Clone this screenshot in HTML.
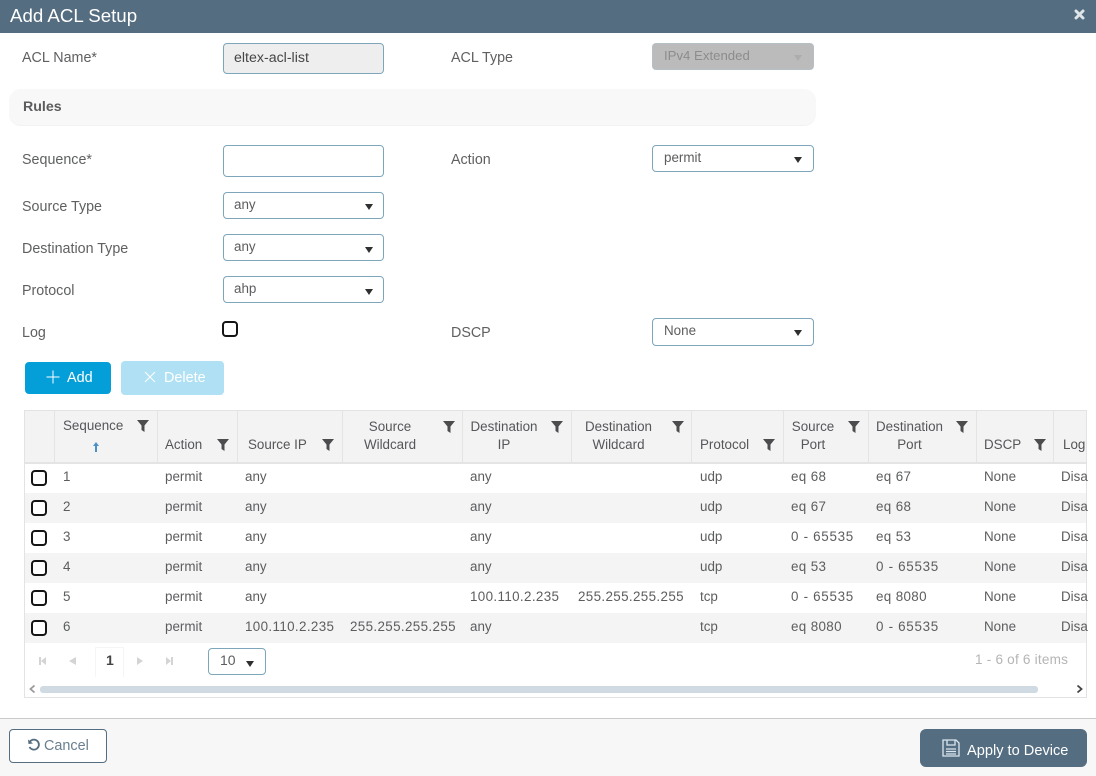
<!DOCTYPE html>
<html><head><meta charset="utf-8"><style>
html,body{margin:0;padding:0;background:#fff;}
#p{position:relative;width:1096px;height:776px;overflow:hidden;background:#fff;font-family:"Liberation Sans",sans-serif;color:#58585b;}
#p div,#p span.a,#p svg{position:absolute;}
.t{position:absolute;white-space:nowrap;font-size:14px;line-height:18px;}
.l{font-size:14.3px;color:#5f6062;}
.c{font-size:13.4px;color:#5c5d5f;}
.n{letter-spacing:.36px;}
.m{letter-spacing:.7px;}
.h{font-size:13.4px;color:#55565a;line-height:18px;text-align:center;}
.box{box-sizing:border-box;border:1px solid #7da6bb;border-radius:4px;background:#fff;}
.ar{width:0;height:0;border-left:4px solid transparent;border-right:4px solid transparent;border-top:6.500px solid #2f2f2f;}
.cb{box-sizing:border-box;width:16px;height:16px;border:2px solid #151515;border-radius:4px;background:#fff;}
.vl{width:1px;background:#e4e4e4;top:411px;height:51px;}
</style></head><body><div id="p">
<div style="left:0;top:0;width:1096px;height:33px;background:#546d81"></div>
<span class="t" style="left:10px;top:5px;font-size:18.7px;line-height:22px;color:#fff">Add ACL Setup</span>
<svg style="left:1074px;top:9px" width="11" height="11" viewBox="0 0 11 11"><path d="M2 2 L9 9 M9 2 L2 9" stroke="#dfe4e8" stroke-width="3" stroke-linecap="round"/></svg>

<span class="t l" style="left:22px;top:49px">ACL Name*</span>
<div class="box" style="left:223px;top:43px;width:161px;height:31px;background:#eee"></div>
<span class="t" style="left:234px;top:49px;font-size:14.2px;color:#454548">eltex-acl-list</span>
<span class="t l" style="left:451px;top:49px">ACL Type</span>
<div class="box" style="left:652px;top:43px;width:162px;height:27px;background:#bbb;border-color:#b4bfc6"></div>
<span class="t" style="left:664px;top:47px;font-size:13.2px;color:#8c8c8c">IPv4 Extended</span>
<div class="ar" style="left:794px;top:55px;border-top-color:#adadad"></div>

<div style="left:9px;top:89px;width:807px;height:36px;background:#f8f8f8;border-radius:12px;box-shadow:0 1px 0 #f2f2f2"></div>
<span class="t" style="left:23px;top:98px;font-size:14.2px;font-weight:bold;color:#5c5c5e">Rules</span>

<span class="t l" style="left:22px;top:151px">Sequence*</span>
<div class="box" style="left:223px;top:145px;width:161px;height:32px"></div>
<span class="t l" style="left:451px;top:151px">Action</span>
<div class="box" style="left:652px;top:145px;width:162px;height:27px"></div>
<span class="t c" style="left:664px;top:149px">permit</span>
<div class="ar" style="left:794px;top:157px"></div>

<span class="t l" style="left:22px;top:198px">Source Type</span>
<div class="box" style="left:223px;top:192px;width:161px;height:27px"></div>
<span class="t c" style="left:234px;top:196px">any</span>
<div class="ar" style="left:365px;top:204px"></div>

<span class="t l" style="left:22px;top:240px">Destination Type</span>
<div class="box" style="left:223px;top:234px;width:161px;height:27px"></div>
<span class="t c" style="left:234px;top:238px">any</span>
<div class="ar" style="left:365px;top:247px"></div>

<span class="t l" style="left:22px;top:282px">Protocol</span>
<div class="box" style="left:223px;top:276px;width:161px;height:27px"></div>
<span class="t c" style="left:234px;top:280px">ahp</span>
<div class="ar" style="left:365px;top:289px"></div>

<span class="t l" style="left:22px;top:324px">Log</span>
<div class="cb" style="left:222px;top:321px"></div>
<span class="t l" style="left:451px;top:324px">DSCP</span>
<div class="box" style="left:652px;top:318px;width:162px;height:28px"></div>
<span class="t c" style="left:664px;top:322px">None</span>
<div class="ar" style="left:794px;top:330px"></div>

<div style="left:25px;top:362px;width:86px;height:32px;background:#049fd9;border-radius:4px"></div>
<svg style="left:45px;top:369px" width="16" height="16" viewBox="0 0 16 16"><path d="M8 1.500V14.500M1.500 8H14.500" stroke="#fff" stroke-width="1"/></svg>
<span class="t" style="left:67px;top:369px;font-size:14.4px;color:#fff">Add</span>
<div style="left:121px;top:361px;width:103px;height:34px;background:#afe0f3;border-radius:4px"></div>
<svg style="left:143px;top:370px" width="14" height="14" viewBox="0 0 14 14"><path d="M2 2L12 12M12 2L2 12" stroke="#fff" stroke-width="1"/></svg>
<span class="t" style="left:164px;top:369px;font-size:14.4px;color:#fff">Delete</span>

<div style="left:24px;top:410px;width:1063px;height:288px;box-sizing:border-box;border:1px solid #e3e3e3;background:#fff"></div>
<div style="left:25px;top:411px;width:1061px;height:51px;background:#f3f3f3;border-bottom:2px solid #e4e4e4"></div>
<div class="vl" style="left:54px"></div><div class="vl" style="left:157px"></div><div class="vl" style="left:237px"></div><div class="vl" style="left:342px"></div><div class="vl" style="left:462px"></div><div class="vl" style="left:571px"></div><div class="vl" style="left:691px"></div><div class="vl" style="left:783px"></div><div class="vl" style="left:868px"></div><div class="vl" style="left:976px"></div><div class="vl" style="left:1053px"></div>

<span class="t h" style="left:63px;top:417px">Sequence</span>
<svg style="left:92px;top:441px" width="8" height="12" viewBox="0 0 8 12"><path d="M4 1L7 5H5V11H3V5H1Z" fill="#4a90c8"/></svg>
<span class="t h" style="left:165px;top:436px">Action</span>
<span class="t h" style="left:248px;top:436px">Source IP</span>
<span class="t h" style="left:345px;top:418px;width:90px">Source<br>Wildcard</span>
<span class="t h" style="left:465px;top:418px;width:78px">Destination<br>IP</span>
<span class="t h" style="left:572px;top:418px;width:93px">Destination<br>Wildcard</span>
<span class="t h" style="left:700px;top:436px">Protocol</span>
<span class="t h" style="left:785px;top:418px;width:56px">Source<br>Port</span>
<span class="t h" style="left:869px;top:418px;width:81px">Destination<br>Port</span>
<span class="t h" style="left:984px;top:436px">DSCP</span>
<span class="t h" style="left:1063px;top:436px">Log</span>

<svg style="left:136px;top:419px" width="14" height="14" viewBox="0 0 14 14"><path d="M1 1H13L8.500 6.500V13L5.500 11V6.500Z" fill="#4c4c4e"/></svg>
<svg style="left:216px;top:438px" width="14" height="14" viewBox="0 0 14 14"><path d="M1 1H13L8.500 6.500V13L5.500 11V6.500Z" fill="#4c4c4e"/></svg>
<svg style="left:321px;top:438px" width="14" height="14" viewBox="0 0 14 14"><path d="M1 1H13L8.500 6.500V13L5.500 11V6.500Z" fill="#4c4c4e"/></svg>
<svg style="left:442px;top:420px" width="14" height="14" viewBox="0 0 14 14"><path d="M1 1H13L8.500 6.500V13L5.500 11V6.500Z" fill="#4c4c4e"/></svg>
<svg style="left:550px;top:420px" width="14" height="14" viewBox="0 0 14 14"><path d="M1 1H13L8.500 6.500V13L5.500 11V6.500Z" fill="#4c4c4e"/></svg>
<svg style="left:671px;top:420px" width="14" height="14" viewBox="0 0 14 14"><path d="M1 1H13L8.500 6.500V13L5.500 11V6.500Z" fill="#4c4c4e"/></svg>
<svg style="left:762px;top:438px" width="14" height="14" viewBox="0 0 14 14"><path d="M1 1H13L8.500 6.500V13L5.500 11V6.500Z" fill="#4c4c4e"/></svg>
<svg style="left:847px;top:420px" width="14" height="14" viewBox="0 0 14 14"><path d="M1 1H13L8.500 6.500V13L5.500 11V6.500Z" fill="#4c4c4e"/></svg>
<svg style="left:955px;top:420px" width="14" height="14" viewBox="0 0 14 14"><path d="M1 1H13L8.500 6.500V13L5.500 11V6.500Z" fill="#4c4c4e"/></svg>
<svg style="left:1033px;top:438px" width="14" height="14" viewBox="0 0 14 14"><path d="M1 1H13L8.500 6.500V13L5.500 11V6.500Z" fill="#4c4c4e"/></svg>

<div style="left:25px;top:493px;width:1061px;height:30px;background:#f4f4f4"></div>
<div style="left:25px;top:553px;width:1061px;height:30px;background:#f4f4f4"></div>
<div style="left:25px;top:613px;width:1061px;height:30px;background:#f4f4f4"></div>

<div class="cb" style="left:31px;top:470px"></div><div class="cb" style="left:31px;top:500px"></div><div class="cb" style="left:31px;top:530px"></div><div class="cb" style="left:31px;top:560px"></div><div class="cb" style="left:31px;top:590px"></div><div class="cb" style="left:31px;top:620px"></div>

<span class="t c" style="left:63px;top:468px">1</span><span class="t c" style="left:165px;top:468px">permit</span><span class="t c" style="left:245px;top:468px">any</span><span class="t c" style="left:470px;top:468px">any</span><span class="t c" style="left:700px;top:468px">udp</span><span class="t c n" style="left:791px;top:468px">eq 68</span><span class="t c n" style="left:876px;top:468px">eq 67</span><span class="t c" style="left:984px;top:468px">None</span><span class="t c" style="left:1061px;top:468px">Disa</span>

<span class="t c" style="left:63px;top:498px">2</span><span class="t c" style="left:165px;top:498px">permit</span><span class="t c" style="left:245px;top:498px">any</span><span class="t c" style="left:470px;top:498px">any</span><span class="t c" style="left:700px;top:498px">udp</span><span class="t c n" style="left:791px;top:498px">eq 67</span><span class="t c n" style="left:876px;top:498px">eq 68</span><span class="t c" style="left:984px;top:498px">None</span><span class="t c" style="left:1061px;top:498px">Disa</span>

<span class="t c" style="left:63px;top:528px">3</span><span class="t c" style="left:165px;top:528px">permit</span><span class="t c" style="left:245px;top:528px">any</span><span class="t c" style="left:470px;top:528px">any</span><span class="t c" style="left:700px;top:528px">udp</span><span class="t c m" style="left:791px;top:528px">0 - 65535</span><span class="t c n" style="left:876px;top:528px">eq 53</span><span class="t c" style="left:984px;top:528px">None</span><span class="t c" style="left:1061px;top:528px">Disa</span>

<span class="t c" style="left:63px;top:558px">4</span><span class="t c" style="left:165px;top:558px">permit</span><span class="t c" style="left:245px;top:558px">any</span><span class="t c" style="left:470px;top:558px">any</span><span class="t c" style="left:700px;top:558px">udp</span><span class="t c n" style="left:791px;top:558px">eq 53</span><span class="t c m" style="left:876px;top:558px">0 - 65535</span><span class="t c" style="left:984px;top:558px">None</span><span class="t c" style="left:1061px;top:558px">Disa</span>

<span class="t c" style="left:63px;top:588px">5</span><span class="t c" style="left:165px;top:588px">permit</span><span class="t c" style="left:245px;top:588px">any</span><span class="t c n" style="left:470px;top:588px">100.110.2.235</span><span class="t c n" style="left:578px;top:588px">255.255.255.255</span><span class="t c" style="left:700px;top:588px">tcp</span><span class="t c m" style="left:791px;top:588px">0 - 65535</span><span class="t c n" style="left:876px;top:588px">eq 8080</span><span class="t c" style="left:984px;top:588px">None</span><span class="t c" style="left:1061px;top:588px">Disa</span>

<span class="t c" style="left:63px;top:618px">6</span><span class="t c" style="left:165px;top:618px">permit</span><span class="t c n" style="left:245px;top:618px">100.110.2.235</span><span class="t c n" style="left:350px;top:618px">255.255.255.255</span><span class="t c" style="left:470px;top:618px">any</span><span class="t c" style="left:700px;top:618px">tcp</span><span class="t c n" style="left:791px;top:618px">eq 8080</span><span class="t c m" style="left:876px;top:618px">0 - 65535</span><span class="t c" style="left:984px;top:618px">None</span><span class="t c" style="left:1061px;top:618px">Disa</span>

<svg style="left:37px;top:655px" width="140" height="12" viewBox="0 0 140 12"><g fill="#d4d4d4"><rect x="2" y="2" width="2" height="8"/><path d="M9 2V10L4 6Z"/><path d="M39 2V10L32 6Z"/><path d="M100 2V10L106 6Z"/><path d="M129 2V10L134 6Z"/><rect x="134" y="2" width="2" height="8"/></g></svg>
<div style="left:95px;top:647px;width:29px;height:30px;box-sizing:border-box;border:1px solid #f5f5f5;border-bottom:none"></div>
<span class="t" style="left:106px;top:651px;font-size:14px;font-weight:bold;color:#444">1</span>
<div class="box" style="left:208px;top:648px;width:58px;height:27px"></div>
<span class="t c" style="left:220px;top:651px;font-size:14px">10</span>
<div class="ar" style="left:246px;top:661px"></div>
<span class="t" style="left:975px;top:651px;font-size:13.6px;letter-spacing:.2px;color:#b5b5b5">1 - 6 of 6 items</span>

<svg style="left:28px;top:684px" width="9" height="10" viewBox="0 0 9 10"><path d="M6.500 1.500L2.500 5L6.500 8.500" fill="none" stroke="#9a9a9a" stroke-width="1.800"/></svg>
<div style="left:40px;top:686px;width:998px;height:7px;background:#cfdae3;border-radius:3px"></div>
<svg style="left:1075px;top:684px" width="9" height="10" viewBox="0 0 9 10"><path d="M2.500 1.500L6.500 5L2.500 8.500" fill="none" stroke="#444" stroke-width="1.800"/></svg>

<div style="left:0;top:718px;width:1096px;height:58px;background:#f7f7f7;border-top:1px solid #c9c9c9;box-sizing:border-box"></div>
<div style="left:9px;top:729px;width:98px;height:34px;box-sizing:border-box;border:1px solid #546d81;border-radius:4px;background:#fff"></div>
<svg style="left:27px;top:738px" width="14" height="14" viewBox="0 0 14 14"><path d="M3 3.500A5 5 0 1 1 2.500 9" fill="none" stroke="#546d81" stroke-width="1.800"/><path d="M1 1.500L1.500 6L6 5.500Z" fill="#546d81"/></svg>
<span class="t" style="left:44px;top:737px;font-size:14.4px;color:#6a7f8f">Cancel</span>
<div style="left:920px;top:729px;width:167px;height:38px;background:#546d81;border-radius:6px"></div>
<svg style="left:942px;top:739px" width="18" height="18" viewBox="0 0 18 18"><path d="M1 1H14L17 4V17H1Z" fill="none" stroke="#dbe6ee" stroke-width="1.300"/><path d="M5 1V6H13V1" fill="none" stroke="#dbe6ee" stroke-width="1.300"/><path d="M4 10H14M4 12.500H14M4 15H14" stroke="#dbe6ee" stroke-width="1.300"/></svg>
<span class="t" style="left:967px;top:742px;font-size:14.6px;color:#fff">Apply to Device</span>
</div></body></html>
